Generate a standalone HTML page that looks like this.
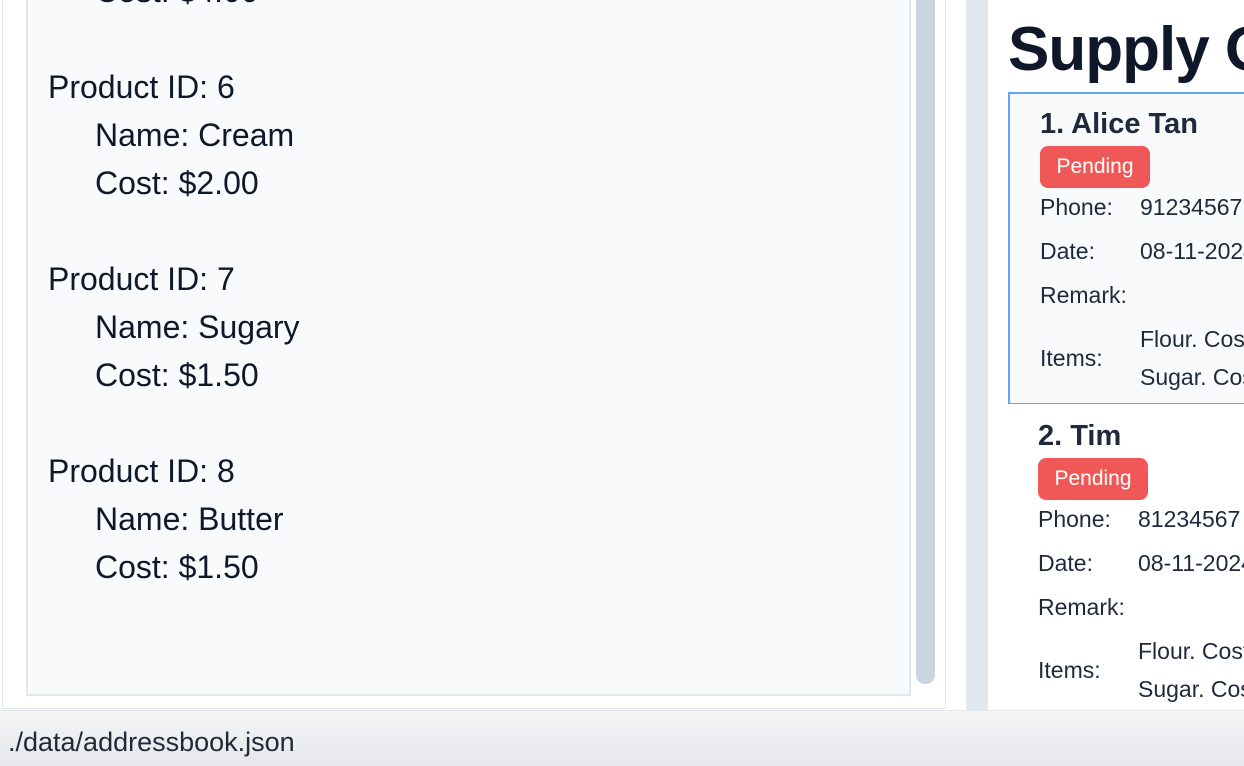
<!DOCTYPE html>
<html><head><meta charset="utf-8"><style>
*{margin:0;padding:0;box-sizing:border-box}
body{width:1244px;height:766px;overflow:hidden;background:#fff;font-family:"Liberation Sans",sans-serif;color:#0f172a;position:relative}
.left{position:absolute;left:2px;top:-10px;width:944px;height:719px;border:1px solid #e2e8f0;background:#fff}
.ta{position:absolute;left:26px;top:-10px;width:885px;height:706px;border:2px solid #e2e8f0;background:#f8fafc}
.sb{position:absolute;left:916px;top:-10px;width:19px;height:694px;background:#cbd5e1;border-radius:0 0 9px 9px}
.l{position:absolute;font-size:32px;line-height:48px;white-space:nowrap}
.strip{position:absolute;left:966px;top:0;width:22px;height:710px;background:#e2e8f0}
.right{position:absolute;left:988px;top:0;width:256px;height:710px;background:#fff;overflow:hidden}
h1{position:absolute;left:20px;top:14px;font-size:62px;font-weight:bold;line-height:72px;white-space:nowrap;color:#0f172a;letter-spacing:-1px}
.card{position:absolute;left:20px;width:300px;height:313px;background:#fff}
.card.sel{border:2px solid #60a5fa;background:#f8fafc}
.nm{position:absolute;font-size:29px;font-weight:bold;color:#1e293b;white-space:nowrap}
.badge{position:absolute;width:110px;height:42px;background:#ef5857;border-radius:8px;color:#fff;font-size:21px;line-height:42px;text-align:center}
.f{position:absolute;font-size:23px;color:#1e293b;white-space:nowrap}
.status{position:absolute;left:0;top:710px;width:1244px;height:56px;background:linear-gradient(#f5f5f5,#e5e7eb);border-top:1px solid #e5e7eb}
.status span{position:absolute;left:8px;top:16px;font-size:27px;color:#1f2937}
</style></head><body>
<div class="left"></div>
<div class="ta"></div>
<div class="sb"></div>
<div class="l" style="left:95px;top:-33px">Cost: $4.00</div>
<div class="l" style="left:48px;top:63px">Product ID: 6</div>
<div class="l" style="left:95px;top:111px">Name: Cream</div>
<div class="l" style="left:95px;top:159px">Cost: $2.00</div>
<div class="l" style="left:48px;top:255px">Product ID: 7</div>
<div class="l" style="left:95px;top:303px">Name: Sugary</div>
<div class="l" style="left:95px;top:351px">Cost: $1.50</div>
<div class="l" style="left:48px;top:447px">Product ID: 8</div>
<div class="l" style="left:95px;top:495px">Name: Butter</div>
<div class="l" style="left:95px;top:543px">Cost: $1.50</div>
<div class="strip"></div>
<div class="right">
<h1>Supply Orders</h1>
<div class="card sel" style="top:92px">
<div class="nm" style="left:30px;top:14px">1. Alice Tan</div>
<div class="badge" style="left:30px;top:52px">Pending</div>
<div class="f" style="left:30px;top:100px">Phone:</div><div class="f" style="left:130px;top:100px">91234567</div>
<div class="f" style="left:30px;top:144px">Date:</div><div class="f" style="left:130px;top:144px">08-11-2024</div>
<div class="f" style="left:30px;top:188px">Remark:</div>
<div class="f" style="left:30px;top:251px">Items:</div>
<div class="f" style="left:130px;top:232px">Flour. Cost</div><div class="f" style="left:130px;top:270px">Sugar. Cost</div>
</div>
<div class="card" style="top:404px">
<div class="nm" style="left:30px;top:16px">2. Tim</div>
<div class="badge" style="left:30px;top:54px">Pending</div>
<div class="f" style="left:30px;top:102px">Phone:</div><div class="f" style="left:130px;top:102px">81234567</div>
<div class="f" style="left:30px;top:146px">Date:</div><div class="f" style="left:130px;top:146px">08-11-2024</div>
<div class="f" style="left:30px;top:190px">Remark:</div>
<div class="f" style="left:30px;top:253px">Items:</div>
<div class="f" style="left:130px;top:234px">Flour. Cost</div><div class="f" style="left:130px;top:272px">Sugar. Cost</div>
</div>
</div>
<div class="status"><span>./data/addressbook.json</span></div>
</body></html>
